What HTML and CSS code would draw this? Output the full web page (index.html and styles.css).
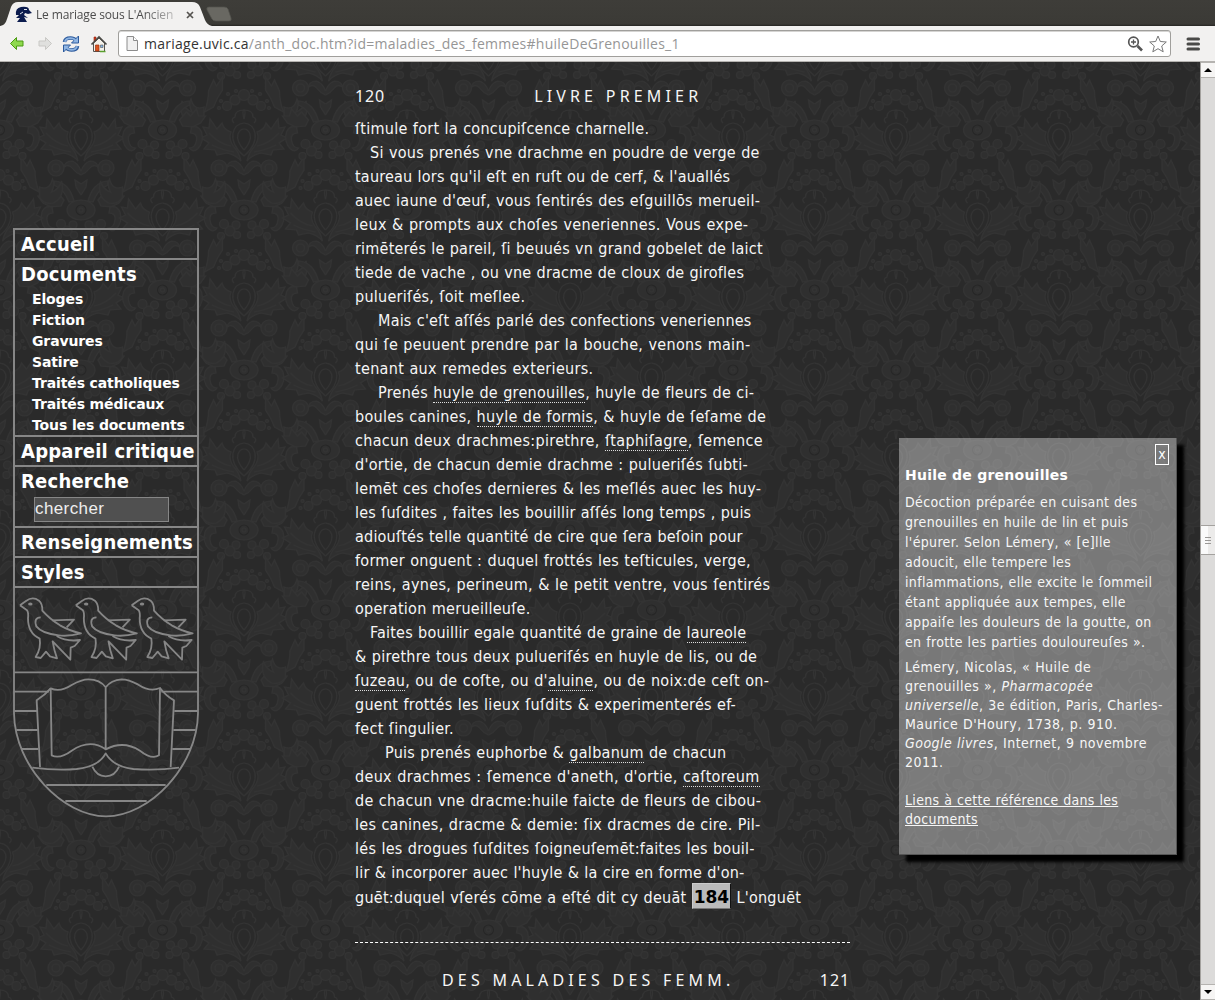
FILE: index.html
```html
<!DOCTYPE html>
<html lang="fr">
<head>
<meta charset="utf-8">
<title>Le mariage sous L'Ancien Régime</title>
<link rel="stylesheet" href="styles.css">
</head>
<body>
<header class="browser">
  <div class="tabstrip">
    <svg class="tabs" width="240" height="26" viewBox="0 0 240 26">
      <path d="M0 26C5 25 6 22 7 19L11 7Q13 2 18 2H192Q198 2 200 7L205 20Q207 25 212 26Z" fill="#f2f1f0"/>
      <path d="M209 7H224Q227 7 228 9L231 18Q232 21 229 21H216Q213 21 212 19L207 10Q206 7 209 7Z" fill="#696862" stroke="#55544f" stroke-width=".7"/>
      <path d="M16 15Q15 8 21 7Q29 6 29 10L32 13L28 14L25 13L24 15L28 18L24 17L27 22H17L20 18L16 18L19 15Z" fill="#0c1c4e"/>
      <path d="M24 9.500l3 0M20 14l3-2" stroke="#dfe4ee" stroke-width="1"/>
      <path d="M187 12l6 6M193 12l-6 6" stroke="#55534f" stroke-width="1.7"/>
    </svg>
    <span class="tab-title">Le mariage sous L'Ancien</span>
  </div>
  <div class="toolbar">
    <svg class="icon back" width="16" height="16" viewBox="0 0 16 16"><path d="M1.500 7.500L7.500 1.500V5H14V10H7.500V13.500Z" fill="#8fd94e" stroke="#4b9a12" stroke-linejoin="round"/></svg>
    <svg class="icon fwd" width="16" height="16" viewBox="0 0 16 16"><path d="M14.500 7.500L8.500 1.500V5H2V10H8.500V13.500Z" fill="#e0e0de" stroke="#c9c8c5" stroke-linejoin="round"/></svg>
    <svg class="icon reload" width="18" height="18" viewBox="0 0 18 18"><path d="M2.500 7Q3 3 8.500 3Q12 3 13.500 5M15.500 11Q15 15 9.500 15Q6 15 4.500 13" fill="none" stroke="#2c5a9c" stroke-width="3.600"/><path d="M16.500 1V8H9.500ZM1.500 17V10H8.500Z" fill="#8fb5e3" stroke="#2c5a9c"/><path d="M2.800 6.800Q4 3.200 8.500 3.200Q12 3.200 14 6M15.200 11.200Q14 14.800 9.500 14.800Q6 14.800 4 12" fill="none" stroke="#8fb5e3" stroke-width="1.800"/></svg>
    <svg class="icon home" width="18" height="18" viewBox="0 0 18 18"><path d="M3.500 8V16.500H14.500V8L9 3Z" fill="#f4f1ea" stroke="#55534f"/><path d="M4 2H6V6H4Z" fill="#d33b1c" stroke="#8d2410" stroke-width=".6"/><path d="M1.500 9.500L9 2L16.500 9.500" fill="none" stroke="#4b4a46" stroke-width="1.600"/><path d="M5.500 10H9V16H5.500Z" fill="#dd5520" stroke="#9c3010" stroke-width=".7"/><path d="M10.500 10H13V12.500H10.500Z" fill="#86b7ea" stroke="#555" stroke-width=".6"/><path d="M10 16.500H15.500" stroke="#5aa02c" stroke-width="1.500"/></svg>
    <div class="omnibox">
      <svg width="12" height="15" viewBox="0 0 12 15"><path d="M1 .5H7.500L11.500 4.500V14.500H1Z" fill="#f1f1f1" stroke="#8c8c8c"/><path d="M7.500 .5V4.500H11.500" fill="#fff" stroke="#8c8c8c"/></svg>
      <span class="url">mariage.uvic.ca<i>/anth_doc.htm?id=maladies_des_femmes#huileDeGrenouilles_1</i></span>
      <svg width="16" height="16" viewBox="0 0 16 16"><circle cx="6.500" cy="6" r="4.800" fill="#fff" stroke="#555" stroke-width="1.700"/><path d="M4 6H9M6.500 3.500V8.500" stroke="#555" stroke-width="1.300"/><path d="M10.500 10L15 14.500" stroke="#555" stroke-width="2.600"/></svg>
      <svg class="star" width="18" height="18" viewBox="0 0 18 18"><path d="M9 1L11.300 6.500L17.300 7L12.700 11L14.200 16.800L9 13.700L3.800 16.800L5.300 11L.7 7L6.700 6.500Z" fill="#fff" stroke="#777" stroke-linejoin="round"/></svg>
    </div>
    <svg class="menu" width="14" height="14" viewBox="0 0 14 14"><path d="M2 2H12.500M2 7H12.500M2 12H12.500" stroke="#4a4a48" stroke-width="3" stroke-linecap="round"/></svg>
  </div>
</header>
<div class="viewport">
<div class="page">
  <nav class="side">
    <ul class="menu-list">
      <li>Accueil</li>
      <li>Documents
        <ul class="sub">
          <li>Eloges</li><li>Fiction</li><li>Gravures</li><li>Satire</li>
          <li>Traités catholiques</li><li>Traités médicaux</li><li>Tous les documents</li>
        </ul>
      </li>
      <li>Appareil critique</li>
      <li class="search">Recherche<input class="field" type="text" value="chercher"></li>
      <li>Renseignements</li>
      <li>Styles</li>
    </ul>
    <svg class="crest" width="186" height="230" viewBox="39 24 558 690">
      <defs>
        <g id="bird">
          <path d="M60 76L78 63Q98 48 117 62Q128 72 127 92Q150 118 180 136Q210 153 243 160Q205 170 176 166Q125 160 109 139Q100 113 122 112"/>
          <path d="M60 76L81 91Q86 98 84 115Q84 160 119 176Q124 205 107 231L122 234L138 215L150 229L171 235Q162 210 158 184L211 239L212 203L224 198L240 180Q200 186 170 168"/>
          <path d="M156 121L222 119L200 142"/>
          <ellipse cx="91" cy="72" rx="4" ry="2"/>
        </g>
      </defs>
      <g fill="none" stroke="#868686" stroke-width="5.500" stroke-linejoin="round">
        <use href="#bird"/><use href="#bird" x="167.500"/><use href="#bird" x="335"/>
        <path d="M42 24V400C44 560 190 709 318 709C448 709 592 560 594 400V24"/>
        <path d="M42 277H594M42 335H147M484 335H594M43 393H111M523 393H594M49 450H113M520 450H587M66 507H115M517 507H570M139 615H497M196 663H440"/>
        <path d="M317 322Q300 298 265 298Q245 298 215 315Q180 338 152 325L155 526Q180 538 215 512Q270 475 317 508Q370 480 420 512Q455 540 477 526L480 324Q450 337 415 314Q385 298 365 298Q333 300 317 322V508"/>
        <path d="M152 325Q135 345 110 361L120 561M480 324Q497 347 522 361L512 561M97 563Q170 572 230 567Q296 560 317 520Q340 560 400 567Q470 572 537 563M277 560Q290 589 317 589Q345 589 357 560"/>
      </g>
    </svg>
  </nav>
  <article class="text">
    <div class="head"><span class="folio">120</span><span class="running first">LIVRE PREMIER</span></div>
    <p>ſtimule fort la concupiſcence charnelle.</p>
    <p class="in1">Si vous prenés vne drachme en poudre de verge de</p>
    <p class="tight">taureau lors qu'il eſt en ruſt ou de cerf, &amp; l'auallés</p>
    <p>auec iaune d'œuf, vous ſentirés des eſguillōs merueil-</p>
    <p class="loose">leux &amp; prompts aux choſes veneriennes. Vous expe-</p>
    <p class="tight">rimēterés le pareil, ſi beuués vn grand gobelet de laict</p>
    <p class="tight">tiede de vache , ou vne dracme de cloux de girofles</p>
    <p>pulueriſés, ſoit meſlee.</p>
    <p class="in2 tight">Mais c'eſt aſſés parlé des confections veneriennes</p>
    <p class="loose">qui ſe peuuent prendre par la bouche, venons main-</p>
    <p class="loose">tenant aux remedes exterieurs.</p>
    <p class="in2">Prenés <a>huyle de grenouilles</a>, huyle de fleurs de ci-</p>
    <p>boules canines, <a>huyle de formis</a>, &amp; huyle de ſeſame de</p>
    <p class="loose">chacun deux drachmes:pirethre, <a>ſtaphiſagre</a>, ſemence</p>
    <p>d'ortie, de chacun demie drachme : pulueriſés ſubti-</p>
    <p>lemēt ces choſes dernieres &amp; les meſlés auec les huy-</p>
    <p class="tight">les ſuſdites , faites les bouillir aſſés long temps , puis</p>
    <p class="tight">adiouſtés telle quantité de cire que ſera beſoin pour</p>
    <p>former onguent : duquel frottés les teſticules, verge,</p>
    <p class="loose">reins, aynes, perineum, &amp; le petit ventre, vous ſentirés</p>
    <p>operation merueilleuſe.</p>
    <p class="in1 tight">Faites bouillir egale quantité de graine de <a>laureole</a></p>
    <p>&amp; pirethre tous deux pulueriſés en huyle de lis, ou de</p>
    <p><a>ſuzeau</a>, ou de coſte, ou d'<a>aluine</a>, ou de noix:de ceſt on-</p>
    <p>guent frottés les lieux ſuſdits &amp; experimenterés ef-</p>
    <p>fect ſingulier.</p>
    <p class="in3">Puis prenés euphorbe &amp; <a>galbanum</a> de chacun</p>
    <p class="loose">deux drachmes : ſemence d'aneth, d'ortie, <a>caſtoreum</a></p>
    <p>de chacun vne dracme:huile faicte de fleurs de cibou-</p>
    <p>les canines, dracme &amp; demie: ſix dracmes de cire. Pil-</p>
    <p>lés les drogues ſuſdites ſoigneuſemēt:faites les bouil-</p>
    <p class="tight">lir &amp; incorporer auec l'huyle &amp; la cire en forme d'on-</p>
    <p class="last">guēt:duquel vſerés cōme a eſté dit cy deuāt <b class="num">184</b> L'onguēt</p>
    <hr class="break">
    <div class="head"><span class="running second">DES MALADIES DES FEMM.</span><span class="folio end">121</span></div>
  </article>
  <aside class="note">
    <button class="close">x</button>
    <h2>Huile de grenouilles</h2>
    <p class="gloss">Décoction préparée en cuisant des<br>grenouilles en huile de lin et puis<br>l'épurer. Selon Lémery, « [e]lle<br>adoucit, elle tempere les<br>inflammations, elle excite le ſommeil<br>étant appliquée aux tempes, elle<br>appaiſe les douleurs de la goutte, on<br>en frotte les parties douloureuſes ».</p>
    <p class="ref">Lémery, Nicolas, « Huile de<br>grenouilles », <em>Pharmacopée<br>universelle</em>, 3e édition, Paris, Charles-<br>Maurice D'Houry, 1738, p. 910.<br><em>Google livres</em>, Internet, 9 novembre<br>2011.</p>
    <p class="ref links"><a>Liens à cette référence dans les<br>documents</a></p>
  </aside>
</div>
<div class="scrollbar">
  <svg class="arrow" width="14" height="14" viewBox="0 0 14 14"><path d="M3 9L7 5L11 9Z" fill="#000"/></svg>
  <div class="track"><div class="thumb"><i></i><i></i><i></i></div></div>
  <svg class="arrow" width="14" height="14" viewBox="0 0 14 14"><path d="M3 5L7 9L11 5Z" fill="#000"/></svg>
</div>
</div>
</body>
</html>
```
FILE: styles.css
```css
* { box-sizing: border-box; }
body { margin: 0; width: 1215px; height: 1000px; overflow: hidden; display: flex; flex-direction: column; background: #2a2a2a; }
p, h2, ul { margin: 0; padding: 0; list-style: none; }

/* browser window */
.browser { flex: none; height: 62px; }
.tabstrip { height: 26px; background: linear-gradient(#3e3d39, #3b3a36 92%, #262522); display: grid; }
.tabs, .tab-title { grid-area: 1 / 1; }
.tab-title { margin: 5px 0 0 36px; width: 141px; white-space: nowrap; font: 12px/19px "Open Sans", sans-serif; letter-spacing: -.15px; color: #4c4c4c; -webkit-mask-image: linear-gradient(90deg, #000 75%, rgba(0,0,0,.25)); mask-image: linear-gradient(90deg, #000 75%, rgba(0,0,0,.25)); }
.toolbar { height: 36px; background: #f2f1f0; border-bottom: 1px solid #b5b3b0; display: flex; align-items: center; }
.back { margin-left: 9px; }
.fwd { margin-left: 12px; }
.reload { margin-left: 9px; }
.home { margin-left: 10px; }
.omnibox { margin-left: 10px; width: 1053px; height: 27px; border: 1px solid #a09f9c; border-radius: 3px; background: #fff; box-shadow: inset 0 1px 0 #d5d4d2; display: flex; align-items: center; padding: 0 3px 0 7px; }
.url { flex: 1; margin-left: 6px; font: 14px/24px "Open Sans", sans-serif; letter-spacing: .26px; color: #333; white-space: nowrap; }
.url i { font-style: normal; color: #969696; }
.star { margin-left: 6px; }
.menu { margin-left: 15px; }

.viewport { flex: 1; display: flex; min-height: 0; overflow: hidden; }
.page {
  flex: 1; display: grid; grid-template-columns: 355px 495px 1fr; align-items: start; overflow: hidden; color: #f6f6f6;
  background: #2a2a2a url("data:image/svg+xml,%3Csvg xmlns='http://www.w3.org/2000/svg' width='163' height='160'%3E%3Cdefs%3E%3Cg id='h'%3E%3Cpath d='M0 19Q13 8 11-4Q9-13 0-14M0 13Q8 4 6-3Q4-8 0-8M0-18Q2-26 0-27Q9-27 9-20Q14-18 10-14' fill='none'/%3E%3Cpath d='M10 10Q16 2 13-5Q20-7 22-14L27-8L34-18L35-9L41-10L37-2L43 1L35 6L40 12L29 13L27 18L17 16Q8 18 3 24Q5 15 10 10Z'/%3E%3Cpath d='M13 9Q25 7 35-4M10 15Q22 13 32 8' fill='none'/%3E%3Ccircle cx='9' cy='-37' r='5'/%3E%3Ccircle cx='17' cy='-31' r='4.500'/%3E%3Ccircle cx='8' cy='-46' r='1.500'/%3E%3Ccircle cx='16' cy='-43' r='1.500'/%3E%3Ccircle cx='23' cy='-36' r='1.500'/%3E%3Ccircle cx='25' cy='-29' r='1.500'/%3E%3Cpath d='M0 34Q3 26 9 24Q16 24 17 30Q12 27 9 31Q5 36 0 38'/%3E%3Ccircle cx='25' cy='31' r='8'/%3E%3Ccircle cx='25' cy='31' r='4'/%3E%3Cpath d='M27 44Q20 44 14 50Q9 56 7 64L12 65Q17 52 27 48Z'/%3E%3Cpath d='M17 63L24 55L28 59L34 52L36 59L43 59L38 66L30 70L20 69Z'/%3E%3Cpath d='M29 70Q36 68 39 75Q42 85 35 92Q30 96 27 91Q33 91 34 83Q35 76 28 76Z'/%3E%3Ccircle cx='8' cy='88' r='4'/%3E%3Ccircle cx='14' cy='94' r='5'/%3E%3Ccircle cx='20' cy='87' r='4.500'/%3E%3Ccircle cx='7' cy='98' r='3.500'/%3E%3Ccircle cx='23' cy='99' r='3.500'/%3E%3Cpath d='M46 34L51 23L54 29L60 20L60 33L55 41L51 50L42 55Q46 44 46 34ZM40-30Q50-26 53-38Q56-32 52-25Q60-28 62-36Q66-20 54-14Q44-12 40-20Z'/%3E%3Cpath d='M0 47L6 43L5 50L0 58' /%3E%3C/g%3E%3Cg id='m' fill='%232f2f2f' stroke='%23333333' stroke-width='1.2'%3E%3Cuse href='%23h'/%3E%3Cuse href='%23h' transform='scale(-1 1)'/%3E%3Ccircle cx='0' cy='-42' r='5.500'/%3E%3Cellipse cx='0' cy='73' rx='14' ry='10'/%3E%3Ccircle cx='0' cy='73' r='5' stroke='%23262626'/%3E%3Ccircle cx='0' cy='73' r='2'/%3E%3C/g%3E%3C/defs%3E%3Cuse href='%23m' x='81' y='50'/%3E%3Cuse href='%23m' x='81' y='-110'/%3E%3Cuse href='%23m' x='81' y='210'/%3E%3Cuse href='%23m' x='-.5' y='-30'/%3E%3Cuse href='%23m' x='162.500' y='-30'/%3E%3Cuse href='%23m' x='-.5' y='130'/%3E%3Cuse href='%23m' x='162.500' y='130'/%3E%3C/svg%3E") 0 25px;
}

/* left menu */
.side { margin: 166px 0 0 13px; width: 186px; color: #fff; }
.menu-list { border: 2px solid #868686; font: bold 20px/28px "DejaVu Sans Condensed", "DejaVu Sans", sans-serif; letter-spacing: .22px; }
.menu-list > li { padding-left: 6px; border-bottom: 2px solid #868686; white-space: nowrap; }
.menu-list > li:last-child { border-bottom: 0; }
.sub { padding: 1px 0 0 11px; height: 147px; font: bold 14px/21px "DejaVu Sans", sans-serif; letter-spacing: -.12px; }
.search { height: 61px; }
.field { display: block; margin: 2px 0 0 13px; width: 135px; height: 25px; padding: 0 0 2px; border: 1px solid #868686; background: #505050; color: #eee; font: 17px "Liberation Sans", Arial, sans-serif; letter-spacing: .4px; }
.crest { display: block; }

/* transcription */
.text { padding-top: 22px; font: 16px/24px "DejaVu Sans Condensed", "DejaVu Sans", sans-serif; letter-spacing: .27px; word-spacing: .4px; white-space: nowrap; }
.head { display: flex; height: 24px; margin-bottom: 9px; font-family: "Noto Sans", sans-serif; }
.running { letter-spacing: 4.15px; }
.first { margin-left: 149px; }
.second { margin-left: 87px; }
.folio { letter-spacing: .9px; }
.end { margin-left: auto; }
.text p { height: 24px; }
.text .tight { letter-spacing: .21px; }
.text .loose { letter-spacing: .32px; }
.text .in1 { padding-left: 15px; }
.text .in2 { padding-left: 23px; }
.text .in3 { padding-left: 30px; }
.text a { border-bottom: 1px dotted #ddd; }
.text .last { height: 27px; line-height: 26px; }
.num { display: inline-block; height: 26px; margin-top: -2px; padding: 0 1px; border: 1px solid; border-color: #ccc #111 #777 #ccc; background: #bbb; color: #000; font: bold 17px/26px "DejaVu Sans", sans-serif; letter-spacing: 0; vertical-align: top; }
.break { margin: 30px 0 25px; border: 0; border-top: 1px dashed #fff; }

/* glossary note */
.note { margin: 376px 0 0 49px; width: 278px; height: 417px; padding: 6px 6px 0; background: rgba(255,255,255,.37); border: 1px solid #555; border-width: 0 1px 1px 0; background-clip: padding-box; box-shadow: 7px 7px 3px #000; display: flex; flex-direction: column; font: 14px/20px "DejaVu Sans Condensed", "DejaVu Sans", sans-serif; letter-spacing: .34px; word-spacing: .4px; white-space: nowrap; }
.close { align-self: flex-end; width: 14px; height: 21px; margin-right: 1px; padding: 0; border: 1px solid #fff; background: none; color: #fff; font: 14px/17px "DejaVu Sans Condensed", sans-serif; }
.note h2 { font: bold 14px/20px "DejaVu Sans", sans-serif; letter-spacing: .24px; word-spacing: 0; color: #fff; }
.gloss { margin-top: 7px; }
.ref { margin-top: 6px; line-height: 19px; letter-spacing: .46px; }
.links { margin-top: 19px; letter-spacing: .32px; }
.links a { text-decoration: underline; }

.scrollbar { flex: none; width: 15px; border-left: 1px solid #a3a19e; background: #dcdbda; display: flex; flex-direction: column; }
.arrow { background: #f6f5f4; border: 1px solid #b5b3b0; border-width: 1px 0; height: 16px; }
.track { flex: 1; padding-top: 447px; }
.thumb { height: 30px; border: 1px solid #a3a19e; border-width: 1px 0; background: linear-gradient(90deg, #fafafa 50%, #ecebea 50%); display: flex; flex-direction: column; align-items: center; justify-content: center; gap: 2px; }
.thumb i { width: 6px; height: 1px; background: #9a9896; }
```
